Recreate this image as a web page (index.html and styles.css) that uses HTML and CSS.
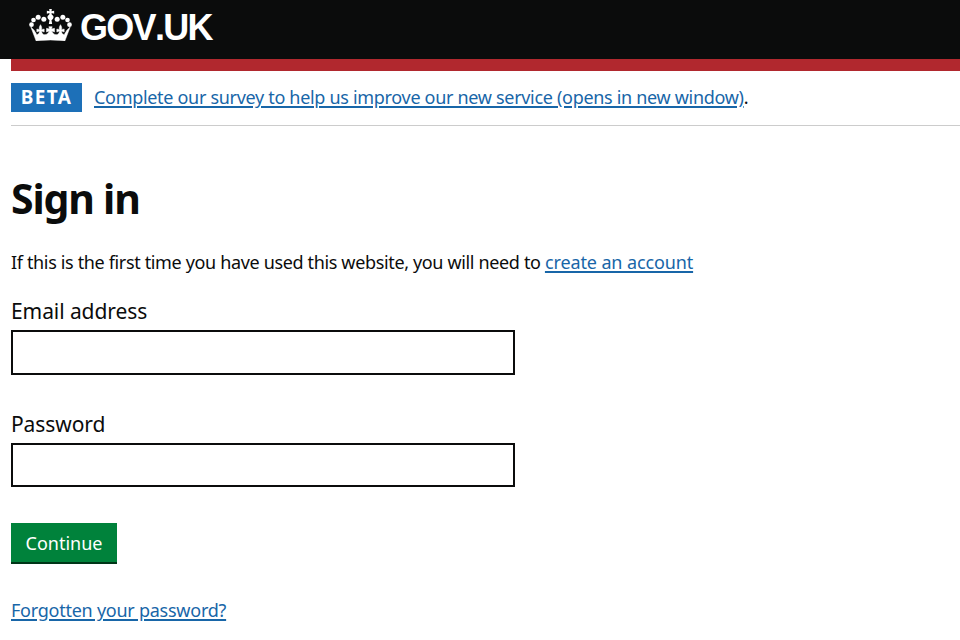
FILE: index.html
```html
<!DOCTYPE html>
<html lang="en">
  <head>
    <meta charset="UTF-8" />
    <meta name="viewport" content="width=device-width, initial-scale=1.0" />
    <title>Sign in - GOV.UK</title>
    <link rel="stylesheet" href="styles.css">
  </head>
  <body>
    <header class="header">
      <svg class="crown" viewBox="12 12 128 96" fill="#ffffff" aria-hidden="true">
        <circle cx="19" cy="59" r="7" />
        <circle cx="25" cy="45" r="7" />
        <circle cx="39" cy="37" r="7.5" />
        <circle cx="56" cy="43" r="7.5" />
        <circle cx="96" cy="43" r="7.5" />
        <circle cx="113" cy="37" r="7.5" />
        <circle cx="127" cy="45" r="7" />
        <circle cx="133" cy="59" r="7" />
        <path d="M72 12h8l-1 7 8-2v9l-8-2 1 5a8 8 0 0 1 3 13l-4 4 2 11H71l2-11-4-4a8 8 0 0 1 3-13l1-5-8 2v-9l8 2z" />
        <path d="M17 66l10 10 8 13c5-1 8-5 8-11l-8 3v-9l8 2c-2-5 0-10 3-15 3 5 5 10 3 15l8-2v9l-8-3c1 7 4 11 10 11s10-4 14-11l-9 3V70l9 2-2-7h10l-2 7 9-2v11l-9-3c4 7 8 11 14 11s9-4 10-11l-8 3v-9l8 2c-2-5 0-10 3-15 3 5 5 10 3 15l8-2v9l-8-3c0 6 3 10 8 11l8-13 10-10-16 42Q76 102 33 108z" stroke="#ffffff" stroke-width="1.5" />
      </svg>
      <span class="logo-text">GOV.UK</span>
    </header>
    <div class="container">
      <div class="phase-banner">
        <strong class="tag">BETA</strong>
        <span class="phase-text"><a href="#" class="survey-link">Complete our survey to help us improve our new service (opens in new window)</a>.</span>
      </div>
      <main>
        <h1>Sign in</h1>
        <p class="intro">If this is the first time you have used this website, you will need to <a href="#" class="create-link">create an account</a></p>
        <form action="/login" method="post">
          <div class="form-group">
            <label for="email">Email address</label>
            <input type="email" id="email" name="email" />
          </div>
          <div class="form-group">
            <label for="password" class="password-label">Password</label>
            <input type="password" id="password" name="password" />
          </div>
          <button type="submit">Continue</button>
        </form>
        <a href="#" class="forgot-link">Forgotten your password?</a>
      </main>
    </div>
  </body>
</html>
```

FILE: styles.css
```css
* {
  box-sizing: border-box;
}

body {
  font-family: "Noto Sans", sans-serif;
  font-size: 18px;
  line-height: 24px;
  margin: 0;
  color: #0b0c0c;
  background-color: #ffffff;
}

a {
  color: #1866a8;
  text-decoration: underline;
  text-decoration-thickness: 1.5px;
  text-underline-offset: 2px;
}

.header {
  display: flex;
  gap: 8px;
  height: 59px;
  padding: 9px 29px 0;
  background-color: #0b0c0c;
}

.crown {
  width: 43px;
  height: 32px;
}

.logo-text {
  color: #ffffff;
  font-family: "Liberation Sans", sans-serif;
  font-size: 36px;
  font-weight: bold;
  font-kerning: none;
  line-height: 37px;
  letter-spacing: -1.7px;
}

.container {
  margin-left: 11px;
  border-top: 12px solid #b1282e;
}

.phase-banner {
  display: flex;
  align-items: center;
  gap: 12px;
  height: 55px;
  padding-bottom: 2px;
  border-bottom: 1px solid #cccccc;
}

.phase-text {
  letter-spacing: -0.31px;
}

.tag {
  width: 71px;
  height: 29px;
  color: #ffffff;
  background-color: #1d70b8;
  font-size: 19px;
  line-height: 29px;
  text-align: center;
  letter-spacing: 1.3px;
}

h1 {
  margin: 44px 0 0;
  font-size: 41px;
  line-height: 56px;
  letter-spacing: -1.2px;
}

.intro {
  margin: 24px 0 0;
  letter-spacing: -0.35px;
}

.create-link {
  letter-spacing: -0.12px;
}

form {
  margin-top: 24px;
}

.form-group {
  margin-bottom: 36px;
}

label {
  display: block;
  margin-bottom: 6px;
  font-size: 21px;
  line-height: 26px;
  letter-spacing: -0.08px;
}

input {
  display: block;
  width: 504px;
  height: 45px;
  padding: 5px;
  border: 2px solid #0b0c0c;
  font-size: 20px;
}

#password {
  height: 44px;
}

button {
  display: block;
  width: 106px;
  height: 41px;
  padding: 0 0 1px;
  color: #ffffff;
  background-color: #00823b;
  border: none;
  box-shadow: inset 0 -2px 0 #003618;
  font-family: inherit;
  font-size: 18px;
}

.forgot-link {
  display: inline-block;
  margin-top: 34px;
  letter-spacing: -0.25px;
}
```
